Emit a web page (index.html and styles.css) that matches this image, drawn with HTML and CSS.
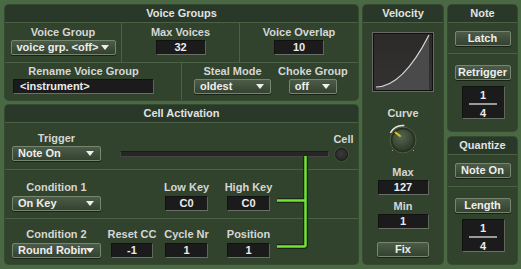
FILE: index.html
```html
<!DOCTYPE html>
<html lang="en">
<head>
    <meta charset="UTF-8">
    <title>Voice Groups</title>
    <link rel="stylesheet" href="styles.css">
</head>
<body>
    <div class="rack">
        <div class="col-left">
            <section class="panel voice-groups">
                <div class="panel-head">Voice Groups</div>
                <div class="vg-row1">
                    <div class="cell">
                        <span class="label">Voice Group</span>
                        <div class="dropdown w-vg">voice grp. &lt;off&gt;<span class="arrow"></span></div>
                    </div>
                    <div class="cell">
                        <span class="label">Max Voices</span>
                        <div class="value w-50">32</div>
                    </div>
                    <div class="cell last">
                        <span class="label">Voice Overlap</span>
                        <div class="value w-50">10</div>
                    </div>
                </div>
                <div class="vg-row2">
                    <div class="rename">
                        <div class="group">
                            <span class="label">Rename Voice Group</span>
                            <div class="value text-field">&lt;instrument&gt;</div>
                        </div>
                    </div>
                    <div class="modes">
                        <div class="group">
                            <span class="label">Steal Mode</span>
                            <div class="dropdown w-steal">oldest<span class="arrow"></span></div>
                        </div>
                        <div class="group">
                            <span class="label">Choke Group</span>
                            <div class="dropdown w-choke">off<span class="arrow"></span></div>
                        </div>
                    </div>
                </div>
            </section>

            <section class="panel cell-activation">
                <div class="panel-head">Cell Activation</div>
                <div class="ca-row first">
                    <div class="group w-cond">
                        <span class="label">Trigger</span>
                        <div class="dropdown w-cond">Note On<span class="arrow"></span></div>
                    </div>
                    <div class="slider"></div>
                    <div class="cell-led">
                        <span class="label">Cell</span>
                        <span class="led"></span>
                    </div>
                </div>
                <div class="ca-row second">
                    <div class="group w-cond">
                        <span class="label">Condition 1</span>
                        <div class="dropdown w-cond">On Key<span class="arrow"></span></div>
                    </div>
                    <div class="group w-key gap-low">
                        <span class="label">Low Key</span>
                        <div class="value w-key">C0</div>
                    </div>
                    <div class="group w-key gap-high">
                        <span class="label">High Key</span>
                        <div class="value w-key">C0</div>
                    </div>
                </div>
                <div class="ca-row third">
                    <div class="group w-cond">
                        <span class="label">Condition 2</span>
                        <div class="dropdown w-cond">Round Robin<span class="arrow"></span></div>
                    </div>
                    <div class="group w-reset gap-reset">
                        <span class="label">Reset CC</span>
                        <div class="value w-reset">-1</div>
                    </div>
                    <div class="group w-key gap-cycle">
                        <span class="label">Cycle Nr</span>
                        <div class="value w-key">1</div>
                    </div>
                    <div class="group w-key gap-high">
                        <span class="label">Position</span>
                        <div class="value w-key">1</div>
                    </div>
                </div>
                <svg class="bracket" width="353" height="159" viewBox="0 0 353 159">
                    <path d="M272 95.5 H300.5 M300.5 51 V140 Q300.5 141.5 299 141.5 H272" fill="none" stroke="#1b2616" stroke-width="5"/>
                    <path d="M272 95.5 H300.5 M300.5 51 V140 Q300.5 141.5 299 141.5 H272" fill="none" stroke="#72e236" stroke-width="2.5"/>
                </svg>
            </section>
        </div>

        <section class="panel velocity">
            <div class="panel-head">Velocity</div>
            <div class="vel-body">
                <div class="curve-box">
                    <svg width="58" height="56" viewBox="0 0 58 56">
                        <path d="M2 53 Q28.5 53 55 1 L55 56 L2 56 Z" fill="#4a4a4a"/>
                        <path d="M2 53 Q28.5 53 55 1" fill="none" stroke="#d8d8d8" stroke-width="1.2"/>
                    </svg>
                </div>
                <span class="label curve-label">Curve</span>
                <svg class="knob" width="32" height="32" viewBox="0 0 32 32">
                    <defs>
                        <radialGradient id="knobFace" cx="40%" cy="35%" r="70%">
                            <stop offset="0" stop-color="#56664f"/>
                            <stop offset="1" stop-color="#2c3829"/>
                        </radialGradient>
                    </defs>
                    <circle cx="16" cy="16" r="13" fill="#27331f" stroke="#4d5d48" stroke-width="1"/>
                    <circle cx="16" cy="16" r="10.5" fill="url(#knobFace)"/>
                    <path d="M3.4 8.8 A14.5 14.5 0 0 1 17.3 1.6" fill="none" stroke="#e6e6e6" stroke-width="1.6"/>
                    <line x1="8.5" y1="8.5" x2="13" y2="12" stroke="#e0c020" stroke-width="2" stroke-linecap="round"/>
                    <line x1="5" y1="27" x2="6" y2="26" stroke="#9aa596" stroke-width="1"/>
                    <line x1="27" y1="27" x2="26" y2="26" stroke="#9aa596" stroke-width="1"/>
                </svg>
                <span class="label max-label">Max</span>
                <div class="value w-vel">127</div>
                <span class="label min-label">Min</span>
                <div class="value w-vel">1</div>
                <div class="button w-fix">Fix</div>
            </div>
        </section>

        <div class="col-right">
            <section class="panel note">
                <div class="panel-head">Note</div>
                <div class="side-top">
                    <div class="button w-side">Latch</div>
                </div>
                <div class="side-bottom">
                    <div class="button w-side">Retrigger</div>
                    <div class="fraction"><span>1</span><i class="bar"></i><span>4</span></div>
                </div>
            </section>
            <section class="panel quantize">
                <div class="panel-head">Quantize</div>
                <div class="side-top">
                    <div class="button w-side">Note On</div>
                </div>
                <div class="side-bottom">
                    <div class="button w-side">Length</div>
                    <div class="fraction"><span>1</span><i class="bar"></i><span>4</span></div>
                </div>
            </section>
        </div>
    </div>
</body>
</html>
```

FILE: styles.css
```css
* {
    box-sizing: border-box;
}
body {
    margin: 0;
    width: 521px;
    height: 269px;
    overflow: hidden;
    background-color: #4a6843;
    font-family: "Liberation Sans", Arial, sans-serif;
    font-weight: bold;
    font-size: 11px;
    color: #d6d6d6;
}
.rack {
    display: flex;
    gap: 5px;
    padding: 5px 4px 5px 5px;
    height: 269px;
}
.col-left {
    width: 353px;
    display: flex;
    flex-direction: column;
    gap: 5px;
}
.col-right {
    width: 69px;
    display: flex;
    flex-direction: column;
    gap: 6px;
}
.panel {
    background-color: #31432d;
    border-radius: 4px;
    overflow: hidden;
    position: relative;
    box-shadow: 0 0 0 1px rgba(30, 45, 28, 0.5);
}
.panel-head {
    height: 18px;
    line-height: 17px;
    text-align: center;
    background-color: #293828;
    border-bottom: 1px solid #4b6146;
    color: #e2e2e2;
}
.label {
    display: block;
    height: 13px;
    line-height: 13px;
    white-space: nowrap;
    text-align: center;
}

/* controls */
.dropdown, .button {
    height: 15px;
    line-height: 13px;
    border: 1px solid #77866f;
    border-radius: 2px;
    background: linear-gradient(#4c5c48, #34422f);
    color: #eeeeee;
    box-shadow: 0 1px 0 rgba(0, 0, 0, 0.5);
    white-space: nowrap;
}
.dropdown {
    position: relative;
    padding-left: 5px;
    text-align: left;
}
.dropdown .arrow {
    position: absolute;
    right: 6px;
    top: 4px;
    border-left: 4px solid transparent;
    border-right: 4px solid transparent;
    border-top: 5px solid #eeeeee;
}
.button {
    text-align: center;
}
.value {
    height: 15px;
    line-height: 13px;
    background-color: #1b1b1b;
    border: 1px solid;
    border-color: #121212 #5f655b #6a7066 #121212;
    color: #ececec;
    text-align: center;
    white-space: nowrap;
}
.text-field {
    width: 141px;
    text-align: left;
    padding-left: 6px;
}
.w-vg { width: 105px; }
.w-50 { width: 50px; }
.w-steal { width: 77px; }
.w-choke { width: 48px; }
.w-cond { width: 89px; }
.w-key { width: 43px; }
.w-reset { width: 42px; }
.w-vel { width: 51px; }
.w-fix { width: 52px; }
.w-side { width: 56px; }

/* voice groups */
.voice-groups {
    height: 95px;
}
.vg-row1 {
    display: grid;
    grid-template-columns: 117px 118px 118px;
    height: 40px;
    border-bottom: 1px solid #4b6146;
}
.vg-row1 .cell {
    display: flex;
    flex-direction: column;
    align-items: center;
    gap: 1px;
    padding-top: 3px;
    border-right: 1px solid #4b6146;
}
.vg-row1 .cell.last {
    border-right: none;
}
.vg-row2 {
    display: flex;
    height: 37px;
}
.group {
    display: flex;
    flex-direction: column;
    align-items: center;
    gap: 1px;
}
.rename {
    width: 177px;
    padding: 2px 0 0 8px;
    border-right: 1px solid #4b6146;
}
.rename .group {
    width: 141px;
}
.modes {
    display: flex;
    gap: 7px;
    padding: 2px 0 0 12px;
}

/* cell activation */
.cell-activation {
    height: 159px;
}
.ca-row {
    display: flex;
    align-items: flex-start;
    padding-left: 7px;
    border-bottom: 1px solid #4b6146;
}
.ca-row .group {
    gap: 2px;
}
.ca-row.first {
    height: 47px;
    padding-top: 9px;
}
.ca-row.first .group {
    gap: 1px;
}
.ca-row.second {
    height: 49px;
    padding-top: 11px;
}
.ca-row.third {
    border-bottom: none;
    padding-top: 9px;
}
.gap-low { margin-left: 64px; }
.gap-high { margin-left: 19px; }
.gap-reset { margin-left: 10px; }
.gap-cycle { margin-left: 12px; }
.slider {
    width: 209px;
    height: 6px;
    margin: 19px 0 0 19px;
    background-color: #262626;
    border: 1px solid #454545;
    border-top-color: #1a1a1a;
}
.cell-led {
    display: flex;
    flex-direction: column;
    align-items: center;
    width: 21px;
    margin: 1px 0 0 4px;
}
.led {
    width: 13px;
    height: 13px;
    margin-top: 2px;
    margin-left: -5px;
    border-radius: 50%;
    background: radial-gradient(circle at 45% 40%, #3b3b3b, #222222);
    border: 1px solid #1a1a1a;
    box-shadow: 0 0 0 1px #3d4f38;
}
.bracket {
    position: absolute;
    left: 0;
    top: 0;
    pointer-events: none;
}

/* velocity */
.velocity {
    width: 80px;
    height: 259px;
}
.vel-body {
    display: flex;
    flex-direction: column;
    align-items: center;
}
.curve-box {
    width: 62px;
    height: 60px;
    margin-top: 9px;
    border: 1px solid #686868;
    background: linear-gradient(#2c2a28, #343332);
    box-shadow: inset 0 0 0 1px #111111;
    padding: 1px;
}
.curve-box svg {
    display: block;
}
.curve-label {
    margin-top: 15px;
}
.knob {
    display: block;
    margin-top: 4px;
}
.max-label {
    margin-top: 10px;
    margin-bottom: 1px;
}
.min-label {
    margin-top: 5px;
    margin-bottom: 1px;
}
.w-fix {
    margin-top: 13px;
}

/* note / quantize */
.note {
    height: 126px;
}
.quantize {
    height: 127px;
}
.side-top {
    display: flex;
    justify-content: center;
    padding-top: 8px;
    height: 31px;
    border-bottom: 1px solid #4b6146;
}
.quantize .side-top {
    height: 32px;
}
.side-bottom {
    display: flex;
    flex-direction: column;
    align-items: center;
    padding-top: 11px;
}
.fraction {
    width: 43px;
    height: 33px;
    margin-top: 6px;
    margin-right: -1px;
    background-color: #1b1b1b;
    border: 1px solid;
    border-color: #121212 #5f655b #6a7066 #121212;
    display: flex;
    flex-direction: column;
    align-items: center;
    color: #ececec;
    line-height: 10px;
    padding-top: 3px;
}
.fraction .bar {
    display: block;
    flex-shrink: 0;
    width: 28px;
    height: 2px;
    margin: 3px 0 3px;
    background-color: #9a9a9a;
}
```
